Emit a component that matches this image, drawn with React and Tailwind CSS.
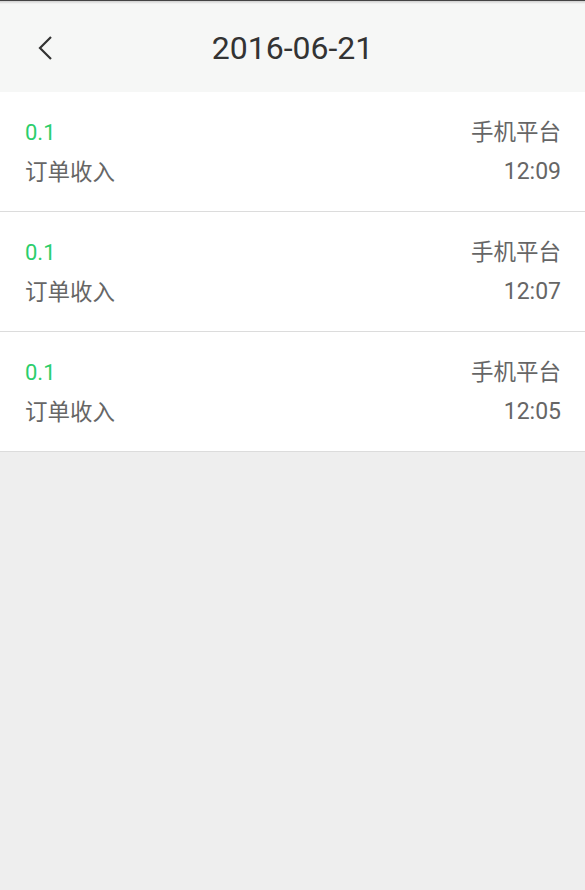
import React from "react";

const rows = [
  { amt: "0.1", src: "手机平台", label: "订单收入", time: "12:09" },
  { amt: "0.1", src: "手机平台", label: "订单收入", time: "12:07" },
  { amt: "0.1", src: "手机平台", label: "订单收入", time: "12:05" },
];

export default function App() {
  return (
    <div
      className="w-[585px] h-[890px] bg-[#eeeeee] flex flex-col"
      style={{ fontFamily: 'Roboto, "Noto Sans CJK SC", sans-serif' }}
    >
      <div className="h-[92px] bg-[#f6f7f6] border-t border-[#444] relative flex items-center justify-center shrink-0">
        <div className="absolute top-0 left-0 right-0 h-[3px] bg-gradient-to-b from-[#cfcfcf] to-transparent" />
        <div className="absolute left-[35px] top-[33px]">
          <svg width="20" height="28" viewBox="0 0 20 28">
            <path d="M16 3 L5 14 L16 25" fill="none" stroke="#333" strokeWidth="2.2" />
          </svg>
        </div>
        <span className="text-[32px] text-[#333] leading-none mt-[2px]">2016-06-21</span>
      </div>
      <div className="flex flex-col bg-white">
        {rows.map((r, i) => (
          <div
            key={i}
            className="h-[120px] border-b border-[#dcdcdc] pl-[25px] pr-[24px] pt-[2px] flex flex-col justify-center"
          >
            <div className="flex justify-between items-center h-[40px]">
              <span className="text-[22px] text-[#2bce6c]">{r.amt}</span>
              <span className="text-[22.5px] text-[#666]">{r.src}</span>
            </div>
            <div className="flex justify-between items-center h-[40px]">
              <span className="text-[22.5px] text-[#666]">{r.label}</span>
              <span className="text-[23px] text-[#666]">{r.time}</span>
            </div>
          </div>
        ))}
      </div>
    </div>
  );
}
